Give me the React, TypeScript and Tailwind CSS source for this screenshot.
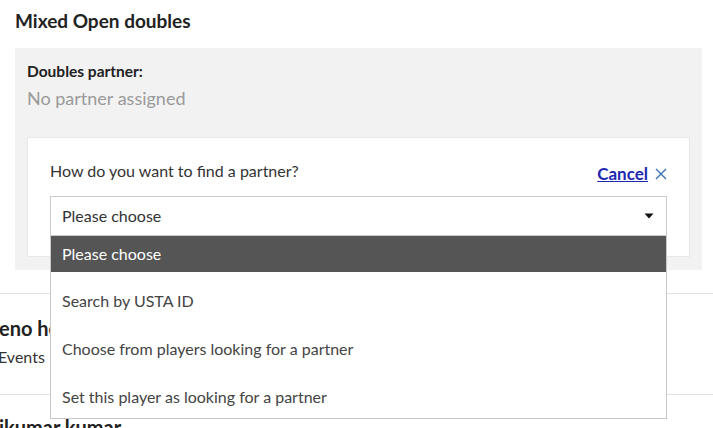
import React from "react";

export default function App() {
  const font = { fontFamily: "Lato, 'Open Sans', sans-serif" };
  return (
    <div className="relative w-[713px] h-[428px] overflow-hidden bg-white text-[#333]" style={font}>
      <div className="px-[15px] pt-[9px]">
        <h1 className="text-[19px] font-bold text-[#222] leading-[24px]">Mixed Open doubles</h1>
        <div className="mt-[15px] mr-[-4px] bg-[#f2f2f2] px-[12px] pt-[14px] pb-[13px]">
          <div className="text-[15.5px] font-bold text-[#222] leading-[18px]">Doubles partner:</div>
          <div className="text-[18px] text-[#9a9a9a] leading-[24px] mt-[6px]">No partner assigned</div>
          <div className="mt-[27px] bg-white border border-[#e8e8e8] px-[22px] pt-[23px] pb-[20px]">
            <div className="flex items-start justify-between">
              <span className="text-[16px] leading-[20px] text-[#333]">How do you want to find a partner?</span>
              <span className="flex items-center gap-[7px] pt-[3px]">
                <a className="text-[17px] font-bold text-[#1c29b0] underline leading-[20px]">Cancel</a>
                <svg width="12" height="12" viewBox="0 0 12 12" className="text-[#3a73b0]">
                  <path d="M1 1L11 11M11 1L1 11" stroke="currentColor" strokeWidth="1.4" />
                </svg>
              </span>
            </div>
            <div className="relative mt-[12px]">
              <div className="h-[40px] border border-[#cccccc] bg-white flex items-center justify-between pl-[11px] pr-[12px]">
                <span className="text-[16px] text-[#333]">Please choose</span>
                <svg width="10" height="6" viewBox="0 0 10 6"><path d="M0.5 0.5H9.5L5 5.5Z" fill="#111" /></svg>
              </div>
              <div className="absolute left-0 right-0 top-full z-10 h-[183px] overflow-hidden bg-white border border-[#c8c8c8] border-t-0">
                <div className="h-[36px] bg-[#555555] flex items-center pl-[11px] text-white text-[16px]">Please choose</div>
                <div className="pt-[5px]">
                  {["Search by USTA ID", "Choose from players looking for a partner", "Set this player as looking for a partner"].map((t) => (
                    <div key={t} className="h-[48px] flex items-center pl-[11px] text-[16px] text-[#444]">{t}</div>
                  ))}
                </div>
              </div>
            </div>
          </div>
        </div>
      </div>
      <div className="mt-[23px] border-t border-[#e2e2e2]">
        <div className="ml-[-1px] pt-[22px] text-[20px] font-bold text-[#222] leading-[24px] whitespace-nowrap">eno hernandez</div>
        <div className="ml-[-2px] mt-[7px] text-[16px] text-[#333] leading-[20px]">Events</div>
      </div>
      <div className="mt-[27px] border-t border-[#e2e2e2]">
        <div className="ml-[-1px] pt-[20px] text-[20px] font-bold text-[#222] leading-[24px] whitespace-nowrap">ikumar kumar</div>
      </div>
    </div>
  );
}
